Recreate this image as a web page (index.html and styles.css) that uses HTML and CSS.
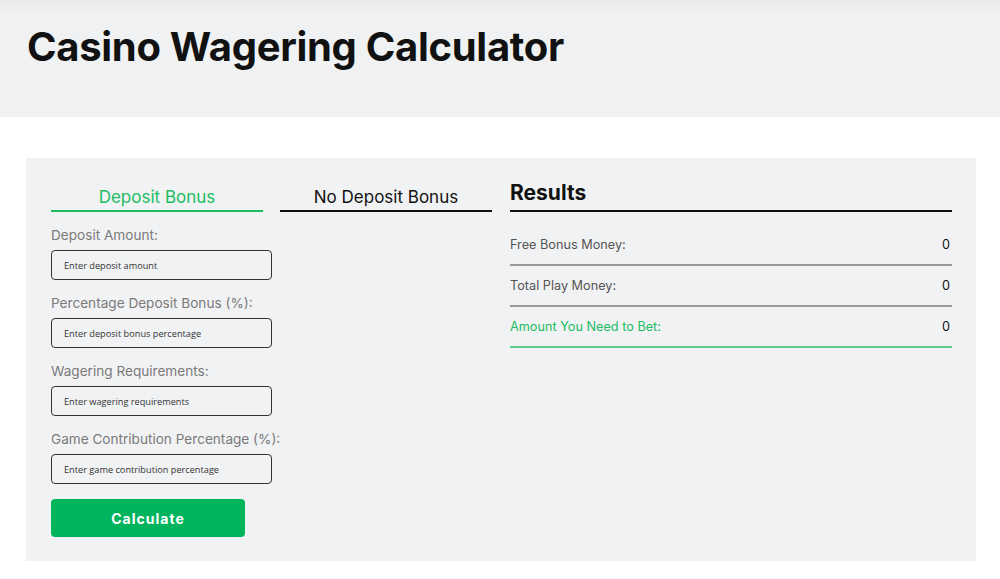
FILE: index.html
```html
<!DOCTYPE html>
<html lang="en">
<head>
<meta charset="utf-8">
<title>Casino Wagering Calculator</title>
<link rel="stylesheet" href="styles.css">
</head>
<body>
<header class="hero">
  <h1 class="hero-title">Casino Wagering Calculator</h1>
</header>
<main class="calc">
  <section class="calc-form">
    <div class="tabs">
      <div class="tab tab-active">Deposit Bonus</div>
      <div class="tab">No Deposit Bonus</div>
    </div>
    <form class="fields">
      <label class="field">
        <span class="field-label">Deposit Amount:</span>
        <input class="field-input" type="text" placeholder="Enter deposit amount">
      </label>
      <label class="field">
        <span class="field-label">Percentage Deposit Bonus (%):</span>
        <input class="field-input" type="text" placeholder="Enter deposit bonus percentage">
      </label>
      <label class="field">
        <span class="field-label">Wagering Requirements:</span>
        <input class="field-input" type="text" placeholder="Enter wagering requirements">
      </label>
      <label class="field">
        <span class="field-label">Game Contribution Percentage (%):</span>
        <input class="field-input" type="text" placeholder="Enter game contribution percentage">
      </label>
      <button class="calc-btn" type="button">Calculate</button>
    </form>
  </section>
  <section class="results">
    <h2 class="results-title">Results</h2>
    <div class="result-row">
      <span class="result-label">Free Bonus Money:</span>
      <span class="result-value">0</span>
    </div>
    <div class="result-row">
      <span class="result-label">Total Play Money:</span>
      <span class="result-value">0</span>
    </div>
    <div class="result-row result-row-total">
      <span class="result-label">Amount You Need to Bet:</span>
      <span class="result-value">0</span>
    </div>
  </section>
</main>
</body>
</html>
```
FILE: styles.css
```css
* { box-sizing: border-box; }

body {
  margin: 0;
  background: #ffffff;
  font-family: "Inter", "Liberation Sans", sans-serif;
  color: #111;
}

.hero {
  height: 117px;
  background: linear-gradient(#e9ebed 0px, #eff1f3 14px, #f0f2f4 100%);
  padding: 22px 0 0 27px;
}

.hero-title {
  margin: 0;
  font-size: 40px;
  font-weight: 700;
  letter-spacing: -0.3px;
  line-height: 50px;
  color: #111;
}

.calc {
  margin: 41px 0 0 26px;
  width: 950px;
  height: 403px;
  background: #f1f2f4;
  padding: 0 24px 24px 25px;
  display: flex;
  gap: 18px;
}

.calc-form {
  width: 441px;
  display: flex;
  flex-direction: column;
}

.tabs {
  display: flex;
  gap: 17px;
  padding-top: 27px;
}

.tab {
  width: 212px;
  text-align: center;
  font-size: 17px;
  line-height: 24px;
  padding-bottom: 1px;
  border-bottom: 2px solid #111;
  color: #111;
}

.tab-active {
  color: #20bd63;
  border-bottom-color: #20bd63;
}

.fields {
  display: flex;
  flex-direction: column;
  margin: 13px 0 0;
}

.field {
  display: flex;
  flex-direction: column;
  margin-bottom: 13px;
}

.field-label {
  font-size: 13.6px;
  line-height: 20px;
  color: #7a7a7a;
  margin-bottom: 5px;
}

.field-input {
  width: 221px;
  height: 30px;
  border: 1px solid #333;
  border-radius: 4px;
  background: #f1f2f4;
  padding: 0 12px;
  font-family: "Open Sans", "Liberation Sans", sans-serif;
  font-size: 9.2px;
  font-weight: 500;
  color: #333;
}

.field-input::placeholder {
  color: #333;
  opacity: 1;
}

.calc-btn {
  margin-top: 2px;
  width: 194px;
  height: 38px;
  border: 0;
  border-radius: 4px;
  background: #00b45e;
  color: #fff;
  font-family: "Inter", "Liberation Sans", sans-serif;
  font-size: 14px;
  font-weight: 700;
  letter-spacing: 1px;
}

.results {
  flex: 1;
  padding-top: 20px;
}

.results-title {
  margin: 0;
  font-size: 21px;
  font-weight: 700;
  line-height: 30px;
  padding-bottom: 2px;
  border-bottom: 2px solid #111;
  margin-bottom: 13px;
}

.result-row {
  display: flex;
  justify-content: space-between;
  align-items: center;
  padding: 10px 0 9px;
  font-size: 12.7px;
  line-height: 20px;
  border-bottom: 2px solid #9a9a9a;
}

.result-label { color: #555; }
.result-value { color: #111; padding-right: 2px; }

.result-row-total .result-label { color: #22bd63; }
.result-row-total { border-bottom-color: #5ccf8c; }
```
